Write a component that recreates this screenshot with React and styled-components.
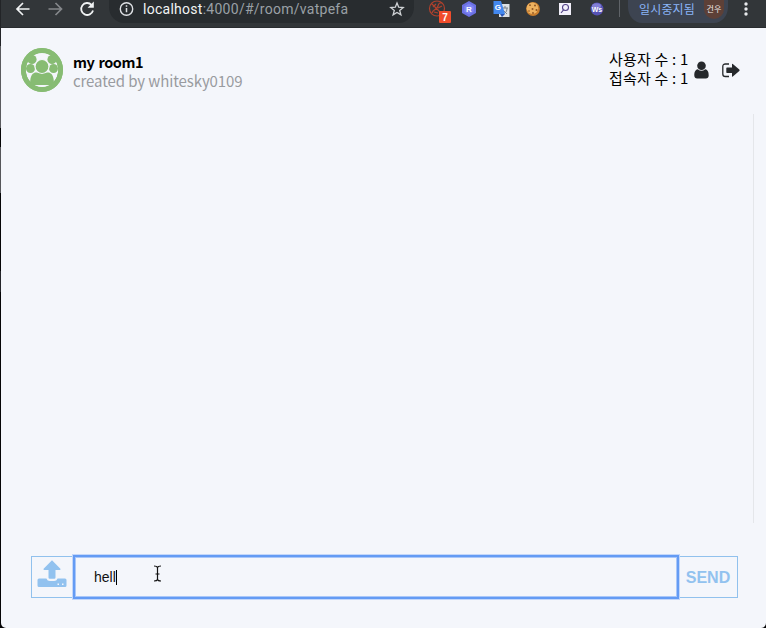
import React from 'react';
import styled, { createGlobalStyle } from 'styled-components';

const GlobalStyle = createGlobalStyle`
  * { box-sizing: border-box; }
  body { margin: 0; overflow: hidden; background: #17191c; }
  svg { display: block; flex: none; }
`;

const Window = styled.div`
  width: 766px;
  height: 628px;
  display: flex;
  flex-direction: column;
  overflow: hidden;
  padding-left: 1px;
  background: linear-gradient(
    #222427 0 46px, #5a5b5e 46px 128px, #050506 128px 147px,
    #55565a 147px 193px, #050506 193px 271px, #242529 271px 292px, #050506 292px
  );
  font-family: 'Noto Sans CJK KR', sans-serif;
`;

const Toolbar = styled.header`
  flex: none;
  height: 28px;
  display: flex;
  align-items: flex-start;
  background: #323639;
  border-bottom: 1px solid #292c2f;
`;

const NavIcons = styled.div`
  width: 108px;
  display: flex;
  gap: 14px;
  padding-left: 13px;
`;

const AddressBar = styled.div`
  width: 305px;
  height: 23px;
  display: flex;
  align-items: flex-start;
  padding-left: 10px;
  border-radius: 0 0 15px 15px / 0 0 16px 16px;
  background: #282c2f;
`;

const Url = styled.span`
  width: 246px;
  margin-left: 9px;
  font: 14px/18px Roboto, sans-serif;
  letter-spacing: 0.27px;
  color: #9aa0a6;
  white-space: nowrap;
  b { font-weight: 400; color: #f1f3f4; }
`;

const Extensions = styled.div`
  width: 205px;
  display: grid;
  grid-template-columns: repeat(6, 32px);
  justify-items: center;
  padding-left: 7px;
`;

const Divider = styled.i`
  width: 1px;
  height: 17px;
  background: #5f6368;
`;

const Profile = styled.div`
  width: 100px;
  height: 23px;
  margin-left: 8px;
  padding-left: 11px;
  display: flex;
  border-radius: 0 0 14px 14px / 0 0 16px 16px;
  background: #3d4451;
  color: #8ab4f8;
  font-size: 12px;
  line-height: 18px;
  letter-spacing: 0.15px;
  white-space: nowrap;
`;

const Avatar = styled.span`
  width: 20px;
  height: 19px;
  margin-left: auto;
  margin-right: 4px;
  border-radius: 0 0 10px 10px;
  background: #5d4037;
  color: #f1e9e6;
  font-size: 8px;
  line-height: 17px;
  text-align: center;
`;

const MenuButton = styled.span`
  margin-left: 9px;
`;

const Page = styled.main`
  flex: 1;
  min-height: 0;
  display: flex;
  flex-direction: column;
  border-radius: 0 0 5px 5px;
  background: #f4f6fb;
`;

const RoomHeader = styled.section`
  height: 86px;
  display: flex;
  align-items: center;
  padding: 0 26px 2px 20px;
`;

const RoomInfo = styled.div`
  flex: 1;
  margin-left: 10px;
  padding-top: 1px;
  font-size: 15px;
  line-height: 19px;
  white-space: nowrap;
`;

const RoomName = styled.div`
  font-weight: 700;
  font-size: 14.5px;
  letter-spacing: -0.4px;
  word-spacing: 1px;
  color: #000;
`;

const Creator = styled.div`
  color: #999b9f;
  font-weight: 400;
  letter-spacing: -0.1px;
`;

const Counts = styled.div`
  width: 80px;
  margin-right: 5px;
  padding-bottom: 5px;
  color: #000;
  font-size: 15px;
  line-height: 19px;
  letter-spacing: 0.2px;
  white-space: nowrap;
`;

const HeaderActions = styled.div`
  display: flex;
  align-items: center;
  gap: 13px;
`;

const Messages = styled.section`
  height: 409px;
  margin-right: 12px;
  border-right: 1px solid #e4e6ea;
`;

const Composer = styled.form`
  height: 42px;
  margin: 33px 28px 0 30px;
  display: flex;
`;

const ComposerButton = styled.button`
  width: ${(p) => p.$width}px;
  padding: ${(p) => p.$padding};
  display: flex;
  align-items: center;
  justify-content: center;
  border: 1px solid #91c1ed;
  background: transparent;
  color: #92c2ef;
  font: 700 16px/1 'Liberation Sans', sans-serif;
`;

const MessageField = styled.div`
  flex: 1;
  display: flex;
  align-items: center;
  padding-left: 19px;
  border: 1px solid #649bf4;
  box-shadow: 0 0 0 1px #649bf4, 0 0 0 2px #c3d7fa, inset 0 0 0 1px #a9c7f9;
  z-index: 1;
  color: #111;
  font: 14px/18px 'Liberation Sans', sans-serif;
`;

const Caret = styled.i`
  width: 1px;
  height: 15px;
  background: #000;
`;

const Pointer = styled.svg`
  margin: -8px 0 0 36px;
`;

function NavArrow({ color, flip }) {
  return (
    <svg width="18" height="18" viewBox="0 0 18 18" fill="none" stroke={color} strokeWidth="1.7">
      <path d={flip ? 'M2.5 9h12.5M9.5 3l6 6-6 6' : 'M15.5 9H3M9 3L3 9l6 6'} />
    </svg>
  );
}

function Reload() {
  return (
    <svg width="18" height="18" viewBox="0 0 18 18" fill="none">
      <path d="M13.5 4.8A6 6 0 1 0 15 10.5" stroke="#f1f3f4" strokeWidth="1.8" />
      <path d="M15.8 1.5v6.2H9.6z" fill="#f1f3f4" />
    </svg>
  );
}

function InfoIcon() {
  return (
    <svg width="15" height="18" viewBox="0 0 15 18" fill="none" stroke="#dfe1e5">
      <circle cx="7.5" cy="9" r="6.2" strokeWidth="1.4" />
      <path d="M7.5 8v4.3M7.5 5.2v1.5" strokeWidth="1.5" />
    </svg>
  );
}

function Star() {
  return (
    <svg width="16" height="18" viewBox="0 0 16 18" fill="none" stroke="#d0d3d6" strokeWidth="1.3">
      <path d="M8 3l1.7 4.2 4.5.3-3.5 2.9 1.2 4.4L8 12.4l-3.9 2.4 1.2-4.4-3.5-2.9 4.5-.3z" />
    </svg>
  );
}

function BlockerIcon() {
  return (
    <svg width="32" height="24" viewBox="-8 0 32 24">
      <g fill="none" stroke="#b0412d" strokeWidth="1.2">
        <circle cx="8" cy="8.5" r="7.5" />
        <path d="M2.5 3.5l11 11M3 13c1-4 5-3 6-7S11 3 13 3M4 7l3-3M9 8l4-2M5 12l4 1" />
      </g>
      <rect x="10" y="11" width="12" height="12" rx="1" fill="#f04d2c" />
      <text x="16" y="20.5" fontSize="10" fontWeight="700" fill="#fff" textAnchor="middle" fontFamily="Liberation Sans, sans-serif">7</text>
    </svg>
  );
}

function HexIcon() {
  return (
    <svg width="16" height="18" viewBox="0 0 16 18">
      <path d="M8 1l7 4v8l-7 4-7-4V5z" fill="#6b70e3" />
      <path d="M8 3.5l4.7 2.7v5.6L8 14.5l-4.7-2.7V6.2z" fill="#7d84f3" />
      <text x="8" y="12" fontSize="8" fontWeight="700" fill="#fff" textAnchor="middle" fontFamily="Liberation Sans, sans-serif">R</text>
    </svg>
  );
}

function TranslateIcon() {
  return (
    <svg width="17" height="18" viewBox="0 0 17 18">
      <path d="M6 4h10.5v13H6z" fill="#dcdfe3" />
      <path d="M9 8h6M12 6v2M10 14c3-1 4-3 4-6M10 10l4 4" stroke="#788089" fill="none" />
      <path d="M.5 1H8l4 13H.5z" fill="#4388ef" />
      <path d="M7 14h5l-3 3z" fill="#2a56b3" />
      <text x="4.8" y="10.3" fontSize="8" fontWeight="700" fill="#fff" textAnchor="middle" fontFamily="Liberation Sans, sans-serif">G</text>
    </svg>
  );
}

function Cookie() {
  return (
    <svg width="16" height="18" viewBox="0 0 16 18">
      <circle cx="8" cy="9" r="6.9" fill="#c87d2d" />
      <circle cx="7.4" cy="8.2" r="5.8" fill="#eeb25f" />
      <g fill="#8f5523">
        <circle cx="5" cy="5.2" r=".9" /><circle cx="10" cy="5.5" r="1" />
        <circle cx="7.5" cy="9" r="1" /><circle cx="4" cy="11" r=".8" />
        <circle cx="11.5" cy="10" r="1" /><circle cx="8" cy="13" r=".9" />
      </g>
    </svg>
  );
}

function SearchTile() {
  return (
    <svg width="18" height="18" viewBox="0 0 18 18">
      <path d="M3 3h12v12H3z" fill="#f2f0fa" />
      <circle cx="9.5" cy="7.5" r="3" fill="none" stroke="#514286" strokeWidth="1.1" />
      <path d="M7.5 9.8L5 13" stroke="#514286" strokeWidth="1.1" />
    </svg>
  );
}

function WsIcon() {
  return (
    <svg width="18" height="18" viewBox="0 0 18 18">
      <circle cx="9" cy="9" r="6.4" fill="#5652b5" />
      <ellipse cx="8.5" cy="6" rx="4.5" ry="2.8" fill="#827fd5" />
      <text x="9" y="11.5" fontSize="7" fontWeight="700" fill="#fff" textAnchor="middle" fontFamily="Liberation Sans, sans-serif">Ws</text>
    </svg>
  );
}

function MenuDots() {
  return (
    <svg width="18" height="18" viewBox="0 0 18 18" fill="#e8eaed">
      <circle cx="9" cy="4" r="1.7" /><circle cx="9" cy="9" r="1.7" /><circle cx="9" cy="14" r="1.7" />
    </svg>
  );
}

function RoomLogo() {
  return (
    <svg width="42" height="44" viewBox="0 0 42 44">
      <ellipse cx="21" cy="22" rx="21" ry="22" fill="#87bc73" />
      <ellipse cx="21" cy="22" rx="16.2" ry="17" fill="#f4f6fb" />
      <g fill="#87bc73">
        <circle cx="11" cy="11.5" r="4.6" /><circle cx="31" cy="11.5" r="4.6" />
        <circle cx="9.5" cy="20.5" r="4.5" /><circle cx="32.5" cy="20.5" r="4.5" />
        <path d="M9 37.5c0-7.500 1-11.500 5-13h14c4 1.500 5 5.500 5 13z" />
        <circle cx="21" cy="18.5" r="7" stroke="#f4f6fb" strokeWidth="1.2" />
        <path d="M14 25.500q2-1 3-.2 4 1.200 8 0 1-.8 3 .2v3H14z" />
      </g>
      <path d="M13 37h16q-8 3.400-16 0z" fill="#f4f6fb" />
      <ellipse cx="21" cy="22" rx="18.6" ry="19.6" fill="none" stroke="#87bc73" strokeWidth="4.8" />
    </svg>
  );
}

function UserIcon() {
  return (
    <svg width="15" height="18" viewBox="0 0 15 18" fill="#25282b">
      <circle cx="7.5" cy="4.7" r="4.3" />
      <path d="M3.8 8.2Q7.5 11.5 11.2 8.2C14 8.8 14.7 11.4 14.7 14.5c0 2-1.2 3-2.8 3H3.1c-1.6 0-2.8-1-2.8-3 0-3.1.7-5.7 3.5-6.300z" />
    </svg>
  );
}

function SignOut() {
  return (
    <svg width="18" height="15" viewBox="0 0 18 15">
      <path d="M7 1H3.4Q.8 1 .8 3.6v7.3q0 2.6 2.6 2.6H7" fill="none" stroke="#25282b" strokeWidth="1.3" />
      <path d="M5 4.6h5V1.4q0-.9.8-.3l6.5 5.4q.7.7 0 1.4l-6.5 5.5q-.8.6-.8-.3V9.900H5q-.7 0-.7-.7V5.300q0-.7.7-.7z" fill="#25282b" />
    </svg>
  );
}

function UploadIcon() {
  return (
    <svg width="30" height="30" viewBox="0 0 30 30" fill="currentColor">
      <path d="M15 .3l8.4 8.500q.5 1.200-.7 1.200h-4.200v7.500q0 1.200-1.200 1.200h-4.600q-1.200 0-1.200-1.200V10H7.300q-1.200 0-.7-1.200z" />
      <path fillRule="evenodd" d="M2 18.5h7.400q1 2.500 3.400 2.500h4.400q2.400 0 3.400-2.500H28q1.500 0 1.500 1.500v5.500q0 1.500-1.500 1.500H2Q.5 27 .5 25.500V20q0-1.500 1.500-1.500zM20.500 23.500v1.500h1.500v-1.500zM25 23.500v1.500h1.500v-1.500z" />
    </svg>
  );
}

export default function App() {
  return (
    <>
      <GlobalStyle />
      <Window>
        <Toolbar>
          <NavIcons>
            <NavArrow color="#f1f3f4" />
            <NavArrow color="#85888b" flip />
            <Reload />
          </NavIcons>
          <AddressBar>
            <InfoIcon />
            <Url><b>localhost</b>:4000/#/room/vatpefa</Url>
            <Star />
          </AddressBar>
          <Extensions>
            <BlockerIcon />
            <HexIcon />
            <TranslateIcon />
            <Cookie />
            <SearchTile />
            <WsIcon />
          </Extensions>
          <Divider />
          <Profile>일시중지됨<Avatar>건우</Avatar></Profile>
          <MenuButton><MenuDots /></MenuButton>
        </Toolbar>
        <Page>
          <RoomHeader>
            <RoomLogo />
            <RoomInfo>
              <RoomName>my room1</RoomName>
              <Creator>created by whitesky0109</Creator>
            </RoomInfo>
            <Counts>
              <div>사용자 수 : 1</div>
              <div>접속자 수 : 1</div>
            </Counts>
            <HeaderActions>
              <UserIcon />
              <SignOut />
            </HeaderActions>
          </RoomHeader>
          <Messages />
          <Composer>
            <ComposerButton type="button" $width={43} $padding="0 1px 4px 0" aria-label="Upload"><UploadIcon /></ComposerButton>
            <MessageField>
              hell<Caret />
              <Pointer width="9" height="17" viewBox="0 0 9 17" fill="none" stroke="#111" strokeWidth="1.2">
                <path d="M1 1q3 0 3.5 1.5Q5 1 8 1M4.5 2.5v12M1 16q3 0 3.5-1.5Q5 16 8 16M2.5 9h4" />
              </Pointer>
            </MessageField>
            <ComposerButton type="button" $width={60} $padding="2px 0 0">SEND</ComposerButton>
          </Composer>
        </Page>
      </Window>
    </>
  );
}
